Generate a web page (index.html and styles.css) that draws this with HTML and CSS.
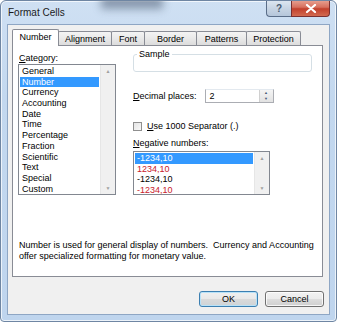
FILE: index.html
```html
<!DOCTYPE html>
<html>
<head>
<meta charset="utf-8">
<link rel="stylesheet" href="styles.css">
</head>
<body>
<div class="window">
  <div class="glass-smudge"></div>
  <div class="titlebar">
    <span class="title">Format Cells</span>
    <div class="caption-btns">
      <div class="cbtn help">?</div>
      <div class="cbtn close">
        <svg width="12" height="9" viewBox="0 0 12 9"><path d="M2 1 L10 8 M10 1 L2 8" stroke="#fff" stroke-width="2.2" stroke-linecap="round"/></svg>
      </div>
    </div>
  </div>
  <div class="client">
    <div class="tabs">
      <div class="tab active">Number</div>
      <div class="tab">Alignment</div>
      <div class="tab">Font</div>
      <div class="tab">Border</div>
      <div class="tab">Patterns</div>
      <div class="tab">Protection</div>
    </div>
    <div class="panel">
      <div class="top">
        <div class="left-col">
          <div class="label"><u>C</u>ategory:</div>
          <div class="listbox cat">
            <div class="items">
              <div class="item">General</div>
              <div class="item sel">Number</div>
              <div class="item">Currency</div>
              <div class="item">Accounting</div>
              <div class="item">Date</div>
              <div class="item">Time</div>
              <div class="item">Percentage</div>
              <div class="item">Fraction</div>
              <div class="item">Scientific</div>
              <div class="item">Text</div>
              <div class="item">Special</div>
              <div class="item">Custom</div>
            </div>
            <div class="scroll"><span class="arr">&#9650;</span><span class="arr">&#9660;</span></div>
          </div>
        </div>
        <div class="right-col">
          <fieldset class="sample"><legend>Sample</legend></fieldset>
          <div class="dec-row">
            <span class="label"><u>D</u>ecimal places:</span>
            <div class="spin">
              <span class="val">2</span>
              <div class="spin-btns"><span>&#9650;</span><span>&#9660;</span></div>
            </div>
          </div>
          <div class="check-row">
            <span class="checkbox"></span>
            <span class="label"><u>U</u>se 1000 Separator (.)</span>
          </div>
          <div class="label neg-label"><u>N</u>egative numbers:</div>
          <div class="listbox neg">
            <div class="items">
              <div class="item sel">-1234,10</div>
              <div class="item red">1234,10</div>
              <div class="item">-1234,10</div>
              <div class="item red">-1234,10</div>
            </div>
            <div class="scroll"><span class="arr">&#9650;</span><span class="arr">&#9660;</span></div>
          </div>
        </div>
      </div>
      <p class="desc">Number is used for general display of numbers.&nbsp; Currency and Accounting<br>offer specialized formatting for monetary value.</p>
    </div>
    <div class="buttons">
      <div class="btn ok">OK</div>
      <div class="btn">Cancel</div>
    </div>
  </div>
</div>
</body>
</html>
```

FILE: styles.css
```css
html, body {
  margin: 0;
  padding: 0;
  background: #ffffff;
}
body {
  font-family: "Liberation Sans", Arial, sans-serif;
  font-size: 9px;
  color: #000;
}
.window {
  position: relative;
  width: 337px;
  height: 322px;
  box-sizing: border-box;
  display: flex;
  flex-direction: column;
  padding: 0 6px 6px 6px;
  background: linear-gradient(180deg, #cfe0f3 0%, #c3d8ef 30%, #bfd5ee 100%);
  border: 1px solid #6f86a3;
  border-radius: 6px 6px 4px 4px;
  box-shadow: inset 0 0 0 1px rgba(255,255,255,0.7);
  overflow: hidden;
}
.glass-smudge {
  position: absolute;
  left: 100px;
  top: -6px;
  width: 62px;
  height: 14px;
  background: #6a7a90;
  filter: blur(4px);
  opacity: 0.7;
}
.titlebar {
  position: relative;
  height: 23px;
  display: flex;
  align-items: flex-start;
}
.title {
  margin-top: 6px;
  margin-left: 1px;
  font-size: 10px;
  color: #1a1a1a;
}
.caption-btns {
  margin-left: auto;
  display: flex;
  margin-right: 0;
  margin-top: -1px;
}
.cbtn {
  height: 17px;
  box-sizing: border-box;
  border: 1px solid #5a6d88;
  border-top: none;
  display: flex;
  align-items: center;
  justify-content: center;
}
.help {
  width: 25px;
  border-radius: 0 0 0 4px;
  border-right: none;
  background: linear-gradient(180deg, #dfe8f2 0%, #c8d5e4 50%, #b5c6da 100%);
  color: #4a5a70;
  font-size: 10px;
  font-weight: bold;
}
.close {
  width: 39px;
  border-radius: 0 0 4px 0;
  border-color: #7a3030;
  background: linear-gradient(180deg, #e8a494 0%, #d7705e 45%, #c2402c 55%, #d26a50 100%);
}
.client {
  flex: 1;
  display: flex;
  flex-direction: column;
  background: #f0f0f0;
  border: 1px solid #8ea6c4;
  padding: 5px 6px 0 4px;
}
.tabs {
  display: flex;
  height: 15px;
  align-items: flex-end;
  position: relative;
  z-index: 1;
}
.tab {
  box-sizing: border-box;
  height: 14px;
  padding: 0 5px;
  border: 1px solid #898c95;
  border-bottom: none;
  margin-left: -1px;
  background: linear-gradient(180deg, #f4f4f4 0%, #e9e9e9 50%, #dcdcdc 100%);
  display: flex;
  align-items: center;
  justify-content: center;
  border-radius: 2px 2px 0 0;
}
.tab:nth-child(2) { width: 54px; }
.tab:nth-child(3) { width: 34px; }
.tab:nth-child(4) { width: 53px; }
.tab:nth-child(5) { width: 51px; }
.tab:nth-child(6) { width: 55px; }
.tab.active {
  height: 17px;
  width: 47px;
  margin-left: 0;
  margin-bottom: -1px;
  background: #ffffff;
  z-index: 2;
  padding-bottom: 2px;
}
.panel {
  height: 232px;
  box-sizing: border-box;
  background: #ffffff;
  border: 1px solid #898c95;
  padding: 8px 5px 0 5px;
  display: flex;
  flex-direction: column;
}
.top {
  display: flex;
  height: 176px;
  flex-shrink: 0;
}
.left-col {
  width: 98px;
  display: flex;
  flex-direction: column;
}
.label {
  line-height: 10px;
}
.left-col .label {
  margin-left: 1px;
  margin-top: -1px;
  margin-bottom: 1px;
}
.listbox {
  box-sizing: border-box;
  border: 1px solid #828790;
  display: flex;
  background: #fff;
}
.listbox .items {
  flex: 1;
  padding: 1px 1px;
}
.item {
  height: 10.7px;
  line-height: 10.7px;
  padding-left: 2px;
  white-space: nowrap;
}
.item.sel {
  background: #3399ff;
  color: #fff;
}
.item.red { color: #c8202c; }
.scroll {
  width: 14px;
  background: #f0f0f0;
  border-left: 1px solid #e6e6e6;
  display: flex;
  flex-direction: column;
  justify-content: space-between;
  align-items: center;
  padding: 3px 0;
}
.arr {
  font-size: 5px;
  color: #a0a0a0;
  line-height: 6px;
}
.cat {
  height: 131px;
}
.right-col {
  margin-left: 17px;
  width: 179px;
  display: flex;
  flex-direction: column;
}
.sample {
  margin: -4px 0 0 0;
  height: 22px;
  box-sizing: border-box;
  border: 1px solid #d5dfe5;
  border-radius: 3px;
  padding: 0;
}
.sample legend {
  padding: 0 2px;
  margin-left: 3px;
  line-height: 8px;
}
.dec-row {
  display: flex;
  align-items: center;
  margin-top: 17px;
  height: 13px;
}
.spin {
  margin-left: 8px;
  width: 69px;
  height: 14px;
  box-sizing: border-box;
  border: 1px solid #abadb3;
  border-top-color: #e3e9ef;
  display: flex;
  background: #fff;
}
.spin .val {
  flex: 1;
  padding-left: 4px;
  line-height: 12px;
}
.spin-btns {
  width: 13px;
  display: flex;
  flex-direction: column;
  border-left: 1px solid #d0d0d0;
  background: linear-gradient(180deg, #f4f4f4, #e2e2e2);
}
.spin-btns span {
  flex: 1;
  font-size: 4px;
  text-align: center;
  line-height: 6px;
  color: #4a5a78;
}
.check-row {
  display: flex;
  align-items: center;
  margin-top: 19px;
  height: 10px;
}
.checkbox {
  width: 9px;
  height: 9px;
  box-sizing: border-box;
  border: 1px solid #8f8f8f;
  background: linear-gradient(135deg, #e4e4e4, #f8f8f8);
  margin-right: 5px;
}
.neg-label {
  margin-top: 7px;
}
.neg {
  margin-top: 3px;
  height: 44px;
  width: 137px;
}
.neg .items { padding-top: 1px; }
.desc {
  margin: 10px 0 0 0;
  line-height: 11px;
  padding-left: 1px;
}
.buttons {
  display: flex;
  justify-content: flex-end;
  gap: 7px;
  margin-top: 14px;
  margin-right: -1px;
}
.btn {
  width: 59px;
  height: 16px;
  box-sizing: border-box;
  border: 1px solid #707070;
  border-radius: 3px;
  background: linear-gradient(180deg, #f2f2f2 0%, #ebebeb 50%, #dddddd 51%, #cfcfcf 100%);
  box-shadow: inset 0 0 0 1px rgba(255,255,255,0.8);
  display: flex;
  align-items: center;
  justify-content: center;
}
.btn.ok {
  border-color: #3c7fb1;
  box-shadow: inset 0 0 0 1px #b8e2f8;
  background: linear-gradient(180deg, #f0f0f0 0%, #e8e8e8 50%, #dadada 51%, #cfd3d6 100%);
}
```
